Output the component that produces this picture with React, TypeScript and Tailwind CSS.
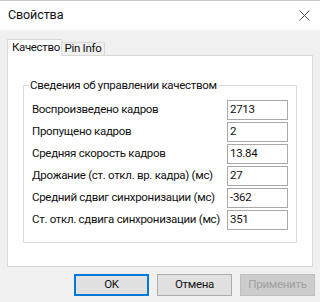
import React from "react";

const rows: [string, string][] = [
  ["Воспроизведено кадров", "2713"],
  ["Пропущено кадров", "2"],
  ["Средняя скорость кадров", "13.84"],
  ["Дрожание (ст. откл. вр. кадра) (мс)", "27"],
  ["Средний сдвиг синхронизации (мс)", "-362"],
  ["Ст. откл. сдвига синхронизации (мс)", "351"],
];

export default function App() {
  return (
    <div
      className="w-[320px] h-[302px] bg-[#f0f0f0] flex flex-col text-[11.5px] tracking-[-0.3px] text-[#111] overflow-hidden whitespace-nowrap"
      style={{ fontFamily: 'Roboto, "Liberation Sans", Arial, sans-serif' }}
    >
      {/* Title bar */}
      <div className="h-[30px] bg-white flex items-center justify-between pl-[8px] pr-[10px] border-t border-[#c8c8c8]">
        <span className="text-[12.5px] tracking-[-0.1px] leading-none">Свойства</span>
        <svg width="11" height="11" viewBox="0 0 11 11">
          <path d="M0.5 0.5 L10.5 10.5 M10.5 0.5 L0.5 10.5" stroke="#555" strokeWidth="1" fill="none" />
        </svg>
      </div>

      {/* Body */}
      <div className="flex flex-col pl-[7px] pr-[7px] pt-[9px]">
        {/* Tabs */}
        <div className="flex items-end h-[16px] relative z-10">
          <div className="h-[17px] w-[55px] bg-white border border-b-0 border-[#d9d9d9] flex items-center pl-[4px] -mb-[1px]">
            <span className="leading-none tracking-[-0.35px]">Качество</span>
          </div>
          <div className="h-[13px] w-[43px] bg-[#f0f0f0] border border-b-0 border-l-0 border-[#d9d9d9] flex items-center justify-center">
            <span className="leading-none">Pin Info</span>
          </div>
        </div>

        {/* Panel */}
        <div className="h-[212px] bg-white border border-[#d9d9d9] pt-[29px] px-[15px]">
          <div className="relative border border-[#dcdcdc] h-[158px] pt-[14px] pl-[8px] pr-[8px]">
            <span className="absolute -top-[9px] left-[5px] bg-white px-[1px] leading-[16px]">
              Сведения об управлении качеством
            </span>
            <div className="flex flex-col gap-[2px]">
              {rows.map(([label, value]) => (
                <div key={label} className="flex items-center justify-between h-[20px]">
                  <span className="leading-none">{label}</span>
                  <div className="w-[61px] h-[20px] border border-[#a9a9a9] bg-white flex items-center pl-[2px]">
                    <span className="leading-none">{value}</span>
                  </div>
                </div>
              ))}
            </div>
          </div>
        </div>

        {/* Buttons */}
        <div className="flex justify-end gap-[8px] pt-[7px] mr-[-2px]">
          <button className="w-[75px] h-[22px] bg-[#e1e1e1] border-2 border-[#0078d7] flex items-center justify-center">
            <span className="leading-none">OK</span>
          </button>
          <button className="w-[75px] h-[22px] bg-[#e1e1e1] border border-[#adadad] flex items-center justify-center">
            <span className="leading-none">Отмена</span>
          </button>
          <button className="w-[75px] h-[22px] bg-[#cccccc] border border-[#bfbfbf] flex items-center justify-center text-[#a0a0a0]">
            <span className="leading-none">Применить</span>
          </button>
        </div>
      </div>
    </div>
  );
}
